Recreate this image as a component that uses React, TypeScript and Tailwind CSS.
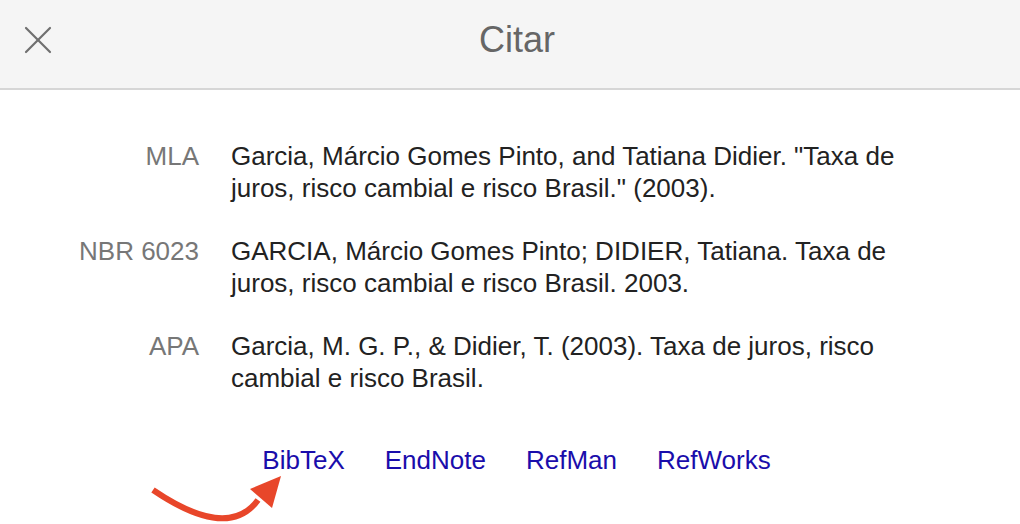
import { X } from 'lucide-react';

const citations = [
  {
    label: 'MLA',
    text: 'Garcia, Márcio Gomes Pinto, and Tatiana Didier. "Taxa de juros, risco cambial e risco Brasil." (2003).',
  },
  {
    label: 'NBR 6023',
    text: 'GARCIA, Márcio Gomes Pinto; DIDIER, Tatiana. Taxa de juros, risco cambial e risco Brasil. 2003.',
  },
  {
    label: 'APA',
    text: 'Garcia, M. G. P., & Didier, T. (2003). Taxa de juros, risco cambial e risco Brasil.',
  },
];

const links = ['BibTeX', 'EndNote', 'RefMan', 'RefWorks'];

const App = () => {
  return (
    <div className="w-[1020px] h-[524px] bg-white overflow-hidden font-['Liberation_Sans',Arial,sans-serif]">
      <div className="relative h-[90px] bg-[#f5f5f5] border-b-2 border-[#d6d6d6] flex items-center justify-center pl-[14px]">
        <button className="absolute left-[14px] top-[16px] text-[#707070]">
          <X className="w-12 h-12" strokeWidth={1.1} />
        </button>
        <h1 className="text-[36px] text-[#666] leading-none -mt-2">Citar</h1>
      </div>

      <div className="pt-[50px] flex flex-col gap-[31px]">
        {citations.map((c) => (
          <div key={c.label} className="flex gap-[32px]">
            <div className="w-[199px] text-right text-[26px] leading-[32px] text-[#777]">{c.label}</div>
            <div className="w-[700px] text-[26px] leading-[32px] text-[#222]">{c.text}</div>
          </div>
        ))}
      </div>

      <div className="relative mt-[50px] flex justify-center gap-[40px] pl-[13px]">
        {links.map((l) => (
          <a key={l} href="#" className="text-[26px] leading-[32px] text-[#1a0dab]">
            {l}
          </a>
        ))}
        <svg className="absolute left-[148px] top-[26px]" width="140" height="60" viewBox="0 0 140 60">
          <path d="M5 20 Q 80 71 110 30" fill="none" stroke="#e8462a" strokeWidth="6" />
          <polygon points="102,19 133,6 124,38" fill="#e8462a" />
        </svg>
      </div>
    </div>
  );
};

export default App;
